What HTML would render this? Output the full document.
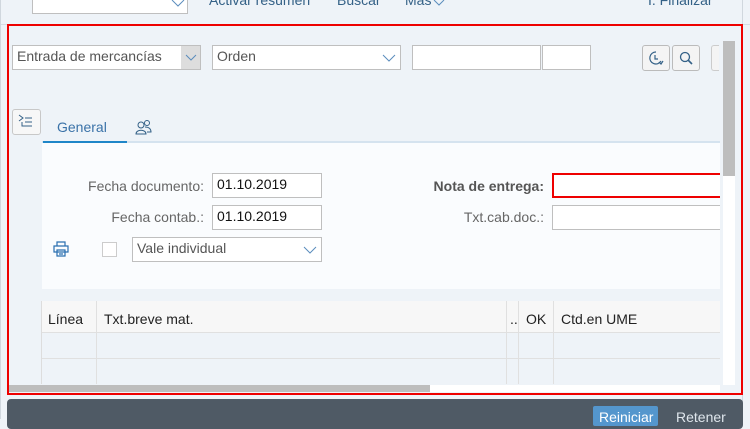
<!DOCTYPE html><html><head><style>
body{margin:0;width:750px;height:419px;overflow:hidden;background:#eef3f8;font-family:"Liberation Sans",sans-serif;position:relative}
.a{position:absolute;box-sizing:border-box}
.inp{position:absolute;box-sizing:border-box;background:#fff;border:1px solid #bfbfbf;font-size:14px;color:#333;padding:2px 4px}
.lbl{position:absolute;font-size:14px;color:#666;text-align:right}
.lnk{position:absolute;font-size:14px;color:#346187;top:-8px}
</style></head><body>
<div class="inp" style="left:32px;top:-2px;width:156px;height:16px"></div>
<svg class="a" style="left:171px;top:0" width="14" height="8"><path d="M1 0l6 6 6-6" stroke="#5b8dbd" fill="none"/></svg>
<div class="lnk" style="left:209px">Activar resumen</div>
<div class="lnk" style="left:337px">Buscar</div>
<div class="lnk" style="left:405px">Más</div>
<svg class="a" style="left:433px;top:0" width="12" height="6"><path d="M1 0l5 5 5-5" stroke="#5b8dbd" fill="none"/></svg>
<div class="lnk" style="left:648px">I. Finalizar</div>
<div class="a" style="left:0;top:24px;width:750px;height:1px;background:#d6dde4"></div>
<div class="a" style="left:742px;top:0;width:1px;height:419px;background:#d0d7de"></div>
<div class="a" style="left:0;top:0;width:1px;height:419px;background:#d0d7de"></div>
<div class="a" style="left:7px;top:24px;width:736px;height:371px;border:2px solid #e00;background:#eef3f8"></div>
<div class="inp" style="left:12px;top:45px;width:189px;height:25px;color:#555">Entrada de mercancías</div>
<div class="a" style="left:181px;top:46px;width:19px;height:23px;background:#ddd"></div>
<svg class="a" style="left:185px;top:54px" width="12" height="7"><path d="M1 1l5 5 5-5" stroke="#5b8dbd" fill="none"/></svg>
<div class="inp" style="left:212px;top:45px;width:189px;height:25px;color:#555">Orden</div>
<svg class="a" style="left:382px;top:54px" width="14" height="8"><path d="M1 1l6 6 6-6" stroke="#5b8dbd" fill="none"/></svg>
<div class="inp" style="left:412px;top:45px;width:129px;height:25px"></div>
<div class="inp" style="left:542px;top:45px;width:49px;height:25px"></div>
<div class="a" style="left:642px;top:45px;width:28px;height:26px;border:1px solid #bbb;border-radius:3px;background:#f4f4f4"></div>
<svg class="a" style="left:647px;top:50px" width="18" height="16"><path d="M9 2a6 6 0 1 0 5 9M8 5v4h3M12 12l2 2 2-3" stroke="#346187" fill="none" stroke-width="1.2"/></svg>
<div class="a" style="left:672px;top:45px;width:28px;height:26px;border:1px solid #bbb;border-radius:3px;background:#f4f4f4"></div>
<svg class="a" style="left:678px;top:50px" width="16" height="16"><circle cx="7" cy="7" r="4.5" stroke="#346187" fill="none" stroke-width="1.3"/><path d="M10 10l4 4" stroke="#346187" stroke-width="1.6"/></svg>
<div class="a" style="left:711px;top:45px;width:8px;height:26px;border:1px solid #ccc;border-right:none;border-radius:3px 0 0 3px;background:#f4f4f4"></div>
<div class="a" style="left:719px;top:41px;width:16px;height:344px;background:#eef3f8"></div>
<div class="a" style="left:723px;top:41px;width:12px;height:135px;background:#bdbdbd"></div>
<div class="a" style="left:723px;top:176px;width:12px;height:209px;background:#fff"></div>
<div class="a" style="left:12px;top:109px;width:29px;height:26px;border:1px solid #c8c8c8;border-radius:3px;background:#f7f7f7"></div>
<svg class="a" style="left:17px;top:113px" width="18" height="16"><path d="M2 2l4 3-4 3M8 5h7M5 9v4h10M8 9h7" stroke="#346187" fill="none"/></svg>
<div class="a" style="left:57px;top:119px;font-size:14px;color:#3a72a8">General</div>
<svg class="a" style="left:135px;top:119px" width="18" height="16"><circle cx="6" cy="6" r="3" stroke="#346187" fill="none"/><circle cx="12" cy="4" r="2.5" stroke="#346187" fill="none"/><path d="M1 15c0-5 10-5 10 0zM10 8c4 0 6 2 6 5h-4" stroke="#346187" fill="none"/></svg>
<div class="a" style="left:42px;top:141px;width:678px;height:2px;background:#d5e3ef"></div>
<div class="a" style="left:43px;top:141px;width:84px;height:2px;background:#1f86c8"></div>
<div class="a" style="left:42px;top:143px;width:678px;height:146px;background:#fafcfe"></div>
<div class="lbl" style="left:40px;top:178px;width:164px">Fecha documento:</div>
<div class="inp" style="left:212px;top:173px;width:110px;height:25px;color:#111">01.10.2019</div>
<div class="lbl" style="left:40px;top:209px;width:164px">Fecha contab.:</div>
<div class="inp" style="left:212px;top:205px;width:110px;height:25px;color:#111">01.10.2019</div>
<svg class="a" style="left:53px;top:241px" width="16" height="16"><path d="M4 1h8v4H4zM1 5h14v6H1zM4 9h8v6H4zM6 11h4M6 13h4" stroke="#2a6fb0" fill="none" stroke-width="1.2"/></svg>
<div class="a" style="left:102px;top:242px;width:15px;height:15px;border:1px solid #ccc;background:#fff"></div>
<div class="inp" style="left:132px;top:237px;width:190px;height:25px;color:#555">Vale individual</div>
<svg class="a" style="left:303px;top:246px" width="14" height="8"><path d="M1 1l6 6 6-6" stroke="#5b8dbd" fill="none"/></svg>
<div class="lbl" style="left:380px;top:178px;width:164px;font-weight:bold;color:#555">Nota de entrega:</div>
<div class="a" style="left:552px;top:173px;width:168px;height:25px;border:2px solid #e00;border-right:none;background:#fff"></div>
<div class="lbl" style="left:380px;top:209px;width:164px">Txt.cab.doc.:</div>
<div class="inp" style="left:552px;top:205px;width:168px;height:25px;border-right:none"></div>
<div class="a" style="left:41px;top:301px;width:679px;height:83px;background:#eef3f8;border-left:1px solid #ddd"></div>
<div class="a" style="left:42px;top:301px;width:678px;height:32px;background:#f7f7f7;border-bottom:1px solid #e0e0e0"></div>
<div class="a" style="left:42px;top:358px;width:678px;height:1px;background:#e0e0e0"></div>
<div class="a" style="left:96px;top:301px;width:1px;height:83px;background:#e0e0e0"></div>
<div class="a" style="left:506px;top:301px;width:1px;height:83px;background:#e0e0e0"></div>
<div class="a" style="left:518px;top:301px;width:1px;height:83px;background:#e0e0e0"></div>
<div class="a" style="left:553px;top:301px;width:1px;height:83px;background:#e0e0e0"></div>
<div class="a" style="left:48px;top:311px;font-size:14px;color:#222">Línea</div>
<div class="a" style="left:104px;top:311px;font-size:14px;color:#222">Txt.breve mat.</div>
<div class="a" style="left:510px;top:311px;font-size:14px;color:#222">..</div>
<div class="a" style="left:526px;top:311px;font-size:14px;color:#222">OK</div>
<div class="a" style="left:561px;top:311px;font-size:14px;color:#222">Ctd.en UME</div>
<div class="a" style="left:9px;top:385px;width:711px;height:7px;background:#fff"></div>
<div class="a" style="left:9px;top:385px;width:421px;height:7px;background:#bdbdbd"></div>
<div class="a" style="left:7px;top:399px;width:736px;height:30px;background:#4f5a65;border-radius:4px"></div>
<div class="a" style="left:593px;top:406px;width:65px;height:20px;background:#5496cd;border-radius:2px;color:#fff;font-size:14px;padding:3px 6px">Reiniciar</div>
<div class="a" style="left:676px;top:409px;color:#dfe6ec;font-size:14px">Retener</div>
</body></html>
